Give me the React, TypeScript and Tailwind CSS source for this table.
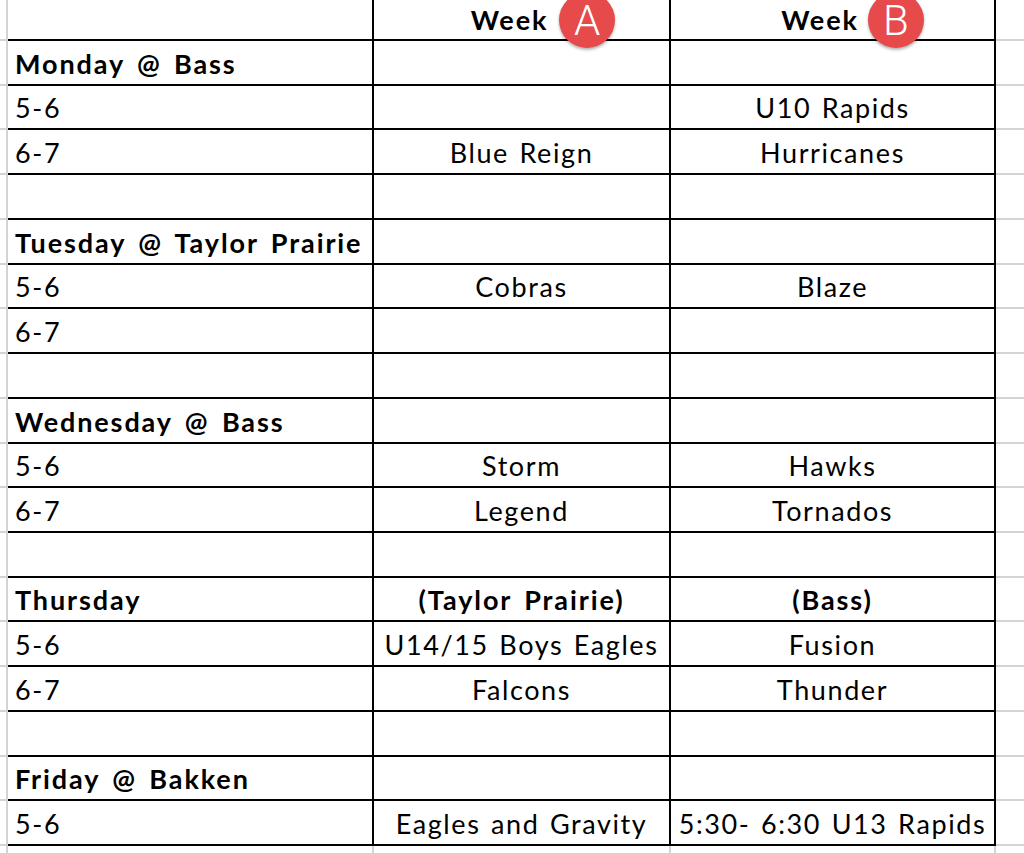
import React from "react";

type Row = { h: string; a: string; b: string; c: string; bold?: boolean; boldAll?: boolean };

const rows: Row[] = [
  { h: "h-[45px]", a: "Monday @ Bass", b: "", c: "", bold: true },
  { h: "h-[44px]", a: "5-6", b: "", c: "U10 Rapids" },
  { h: "h-[45px]", a: "6-7", b: "Blue Reign", c: "Hurricanes" },
  { h: "h-[45px]", a: "", b: "", c: "" },
  { h: "h-[45px]", a: "Tuesday @ Taylor Prairie", b: "", c: "", bold: true },
  { h: "h-[44px]", a: "5-6", b: "Cobras", c: "Blaze" },
  { h: "h-[45px]", a: "6-7", b: "", c: "" },
  { h: "h-[45px]", a: "", b: "", c: "" },
  { h: "h-[45px]", a: "Wednesday @ Bass", b: "", c: "", bold: true },
  { h: "h-[44px]", a: "5-6", b: "Storm", c: "Hawks" },
  { h: "h-[45px]", a: "6-7", b: "Legend", c: "Tornados" },
  { h: "h-[45px]", a: "", b: "", c: "" },
  { h: "h-[44px]", a: "Thursday", b: "(Taylor Prairie)", c: "(Bass)", bold: true, boldAll: true },
  { h: "h-[45px]", a: "5-6", b: "U14/15 Boys Eagles", c: "Fusion" },
  { h: "h-[45px]", a: "6-7", b: "Falcons", c: "Thunder" },
  { h: "h-[45px]", a: "", b: "", c: "" },
  { h: "h-[44px]", a: "Friday @ Bakken", b: "", c: "", bold: true },
  { h: "h-[45px]", a: "5-6", b: "Eagles and Gravity", c: "5:30- 6:30 U13 Rapids" },
];

const REG = "font-normal tracking-[1.6px] [word-spacing:2px]";
const BOLD = "font-bold tracking-[1.9px] [word-spacing:4px]";

function Badge({ letter, pos }: { letter: string; pos: string }) {
  return (
    <div
      className={`absolute ${pos} w-[56px] h-[56px] rounded-full bg-[#e64a4a] shadow-[0_2px_3px_rgba(0,0,0,0.3)] flex items-center justify-center text-white font-['Roboto',sans-serif] font-light text-[42px] tracking-normal z-10`}
    >
      <span className="leading-[30px] mt-[1px]">{letter}</span>
    </div>
  );
}

export default function App() {
  return (
    <div className="w-[1024px] h-[853px] overflow-hidden bg-white text-black font-['Lato',sans-serif] text-[27px] leading-none">
      {/* header */}
      <div className="flex h-[41px]">
        <div className="w-[8px] shrink-0 border-r-2 border-b-2 border-[#d4d4d4]" />
        <div className="w-[366px] shrink-0 border-r-2 border-b-2 border-black" />
        <div className={`relative w-[297px] shrink-0 border-r-2 border-b-2 border-black flex items-end justify-center pb-[6px] pr-[24px] ${BOLD}`}>
          <span>Week</span>
          <Badge letter="A" pos="left-[185px] top-[-8px]" />
        </div>
        <div className={`relative w-[325px] shrink-0 border-r-2 border-b-2 border-black flex items-end justify-center pb-[6px] pr-[25px] ${BOLD}`}>
          <span>Week</span>
          <Badge letter="B" pos="left-[197px] top-[-8px]" />
        </div>
        <div className="flex-1 border-b-2 border-[#d4d4d4]" />
      </div>
      {rows.map((r, i) => (
        <div key={i} className={`flex ${r.h}`}>
          <div className="w-[8px] shrink-0 border-r-2 border-b-2 border-[#d4d4d4]" />
          <div
            className={`w-[366px] shrink-0 border-r-2 border-b-2 border-black flex items-end pl-[7px] pb-[7px] whitespace-nowrap ${r.bold ? BOLD : REG}`}
          >
            {r.a}
          </div>
          <div
            className={`w-[297px] shrink-0 border-r-2 border-b-2 border-black flex items-end justify-center pb-[7px] whitespace-nowrap ${r.boldAll ? BOLD : REG}`}
          >
            {r.b}
          </div>
          <div
            className={`w-[325px] shrink-0 border-r-2 border-b-2 border-black flex items-end justify-center pb-[7px] whitespace-nowrap ${r.boldAll ? BOLD : REG}`}
          >
            {r.c}
          </div>
          <div className="flex-1 border-b-2 border-[#d4d4d4]" />
        </div>
      ))}
      <div className="flex h-[10px]">
        <div className="w-[8px] shrink-0 border-r-2 border-[#d4d4d4]" />
        <div className="w-[366px] shrink-0 border-r-2 border-[#d4d4d4]" />
        <div className="w-[297px] shrink-0 border-r-2 border-[#d4d4d4]" />
        <div className="w-[325px] shrink-0 border-r-2 border-[#d4d4d4]" />
        <div className="flex-1" />
      </div>
    </div>
  );
}
